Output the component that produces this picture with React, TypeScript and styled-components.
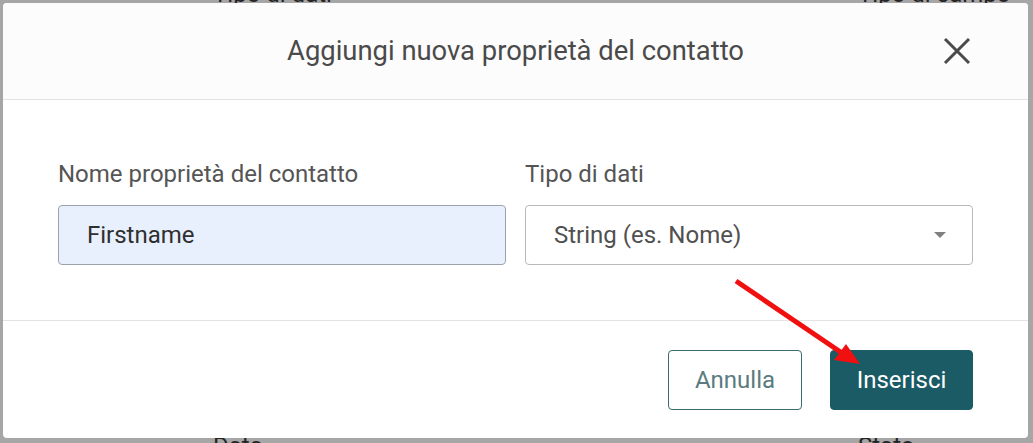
import React from "react";
import styled, { createGlobalStyle } from "styled-components";

const Global = createGlobalStyle`
  html, body { margin: 0; padding: 0; }
  body {
    width: 1033px;
    height: 443px;
    overflow: hidden;
    background: #ffffff;
    font-family: Roboto, "Liberation Sans", Arial, sans-serif;
  }
`;

const Stage = styled.div`
  position: relative;
  width: 1033px;
  height: 443px;
  overflow: hidden;
`;

const Page = styled.div`
  height: 100%;
  display: flex;
  flex-direction: column;
  justify-content: space-between;
`;

const PageRow = styled.div<{ $top?: boolean }>`
  display: grid;
  grid-template-columns: 645px 1fr;
  padding-left: 213px;
  margin-top: ${(p) => (p.$top ? "-20px" : "0")};
  margin-bottom: ${(p) => (p.$top ? "0" : "-17px")};
`;

const PageText = styled.span`
  font-size: 24px;
  line-height: 28px;
  color: #3a3a3a;
`;

const Backdrop = styled.div`
  position: absolute;
  inset: 0;
  background: rgba(0, 0, 0, 0.35);
`;

const Modal = styled.div`
  position: absolute;
  left: 3px;
  top: 3px;
  width: 1025px;
  height: 435px;
  background: #ffffff;
  border-radius: 4px;
  display: flex;
  flex-direction: column;
  overflow: hidden;
`;

const Header = styled.div`
  height: 97px;
  box-sizing: border-box;
  background: #fcfcfc;
  border-bottom: 1px solid #e3e3e3;
  display: grid;
  grid-template-columns: 1fr auto 1fr;
  align-items: center;
`;

const Title = styled.h2`
  grid-column: 2;
  margin: 0;
  font-size: 27.4px;
  line-height: 32px;
  font-weight: 400;
  color: #4a4a4a;
`;

const CloseButton = styled.button`
  grid-column: 3;
  justify-self: end;
  margin-right: 57px;
  width: 28px;
  height: 28px;
  padding: 0;
  border: none;
  background: transparent;
  display: flex;
  cursor: pointer;
`;

const Body = styled.div`
  padding: 60px 55px 55px;
  border-bottom: 1px solid #e3e3e3;
  display: grid;
  grid-template-columns: 1fr 1fr;
  column-gap: 19px;
`;

const Field = styled.div`
  display: flex;
  flex-direction: column;
  gap: 17px;
`;

const Label = styled.label`
  font-size: 24px;
  line-height: 28px;
  color: #555555;
`;

const Input = styled.div<{ $filled?: boolean }>`
  height: 60px;
  box-sizing: border-box;
  border-radius: 4px;
  border: 1px solid ${(p) => (p.$filled ? "#9aa3ad" : "#b9b9b9")};
  background: ${(p) => (p.$filled ? "#e8f0fe" : "#ffffff")};
  display: flex;
  align-items: center;
  justify-content: space-between;
  padding: 0 28px;
  font-size: 24px;
  color: ${(p) => (p.$filled ? "#2f2f2f" : "#505050")};
`;

const Caret = styled.span`
  width: 0;
  height: 0;
  border-left: 6px solid transparent;
  border-right: 6px solid transparent;
  border-top: 6px solid #808080;
  margin-right: -2px;
`;

const Footer = styled.div`
  flex: 1;
  display: flex;
  justify-content: flex-end;
  align-items: flex-start;
  gap: 28px;
  padding: 29px 55px 0;
`;

const Button = styled.button<{ $primary?: boolean }>`
  height: 60px;
  box-sizing: border-box;
  border-radius: 4px;
  font-family: inherit;
  font-size: 24px;
  padding: 0;
  width: ${(p) => (p.$primary ? "143px" : "134px")};
  border: 1px solid ${(p) => (p.$primary ? "#1b5b66" : "#3b6b74")};
  background: ${(p) => (p.$primary ? "#1b5b66" : "#ffffff")};
  color: ${(p) => (p.$primary ? "#ffffff" : "#5b7b80")};
  cursor: pointer;
`;

const Annotation = styled.svg`
  position: absolute;
  left: 0;
  top: 0;
  pointer-events: none;
`;

export default function App() {
  return (
    <>
      <Global />
      <Stage>
        <Page>
          <PageRow $top>
            <PageText>Tipo di dati</PageText>
            <PageText>Tipo di campo</PageText>
          </PageRow>
          <PageRow>
            <PageText>Data</PageText>
            <PageText>Stato</PageText>
          </PageRow>
        </Page>
        <Backdrop />
        <Modal>
          <Header>
            <Title>Aggiungi nuova proprietà del contatto</Title>
            <CloseButton aria-label="Chiudi">
              <svg width="28" height="28" viewBox="0 0 28 28">
                <path d="M2 2 L26 26 M26 2 L2 26" stroke="#4a4a4a" strokeWidth="3" strokeLinecap="butt" />
              </svg>
            </CloseButton>
          </Header>
          <Body>
            <Field>
              <Label>Nome proprietà del contatto</Label>
              <Input $filled>Firstname</Input>
            </Field>
            <Field>
              <Label>Tipo di dati</Label>
              <Input>
                String (es. Nome)
                <Caret />
              </Input>
            </Field>
          </Body>
          <Footer>
            <Button>Annulla</Button>
            <Button $primary>Inserisci</Button>
          </Footer>
        </Modal>
        <Annotation width="1033" height="443">
          <line x1="736" y1="281" x2="842" y2="353" stroke="#f01010" strokeWidth="5" />
          <polygon points="860,364 834,360 846,344" fill="#f01010" />
        </Annotation>
      </Stage>
    </>
  );
}
